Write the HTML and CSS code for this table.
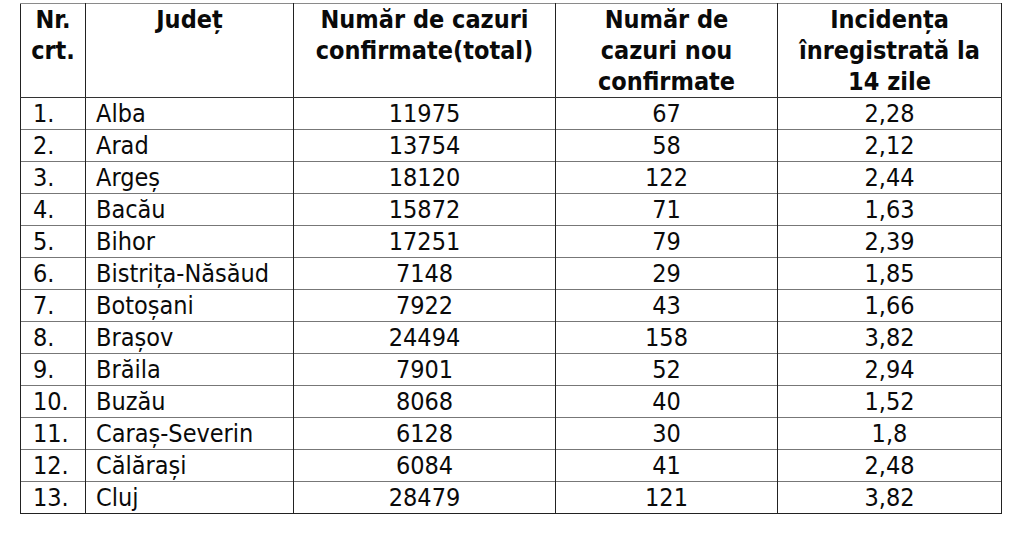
FILE: index.html
```html
<!DOCTYPE html>
<html lang="ro">
<head>
<meta charset="utf-8">
<title>Cazuri confirmate</title>
<link rel="stylesheet" href="styles.css">
</head>
<body>
<table class="tbl">
  <colgroup>
    <col class="c1"><col class="c2"><col class="c3"><col class="c4"><col class="c5">
  </colgroup>
  <thead>
    <tr>
      <th>Nr.<br>crt.</th>
      <th>Județ</th>
      <th>Număr de cazuri<br>confirmate(total)</th>
      <th>Număr de<br>cazuri nou<br>confirmate</th>
      <th>Incidența<br>înregistrată la<br>14 zile</th>
    </tr>
  </thead>
  <tbody>
    <tr><td class="nr">1.</td><td class="name">Alba</td><td>11975</td><td>67</td><td>2,28</td></tr>
    <tr><td class="nr">2.</td><td class="name">Arad</td><td>13754</td><td>58</td><td>2,12</td></tr>
    <tr><td class="nr">3.</td><td class="name">Argeș</td><td>18120</td><td>122</td><td>2,44</td></tr>
    <tr><td class="nr">4.</td><td class="name">Bacău</td><td>15872</td><td>71</td><td>1,63</td></tr>
    <tr><td class="nr">5.</td><td class="name">Bihor</td><td>17251</td><td>79</td><td>2,39</td></tr>
    <tr><td class="nr">6.</td><td class="name">Bistrița-Năsăud</td><td>7148</td><td>29</td><td>1,85</td></tr>
    <tr><td class="nr">7.</td><td class="name">Botoșani</td><td>7922</td><td>43</td><td>1,66</td></tr>
    <tr><td class="nr">8.</td><td class="name">Brașov</td><td>24494</td><td>158</td><td>3,82</td></tr>
    <tr><td class="nr">9.</td><td class="name">Brăila</td><td>7901</td><td>52</td><td>2,94</td></tr>
    <tr><td class="nr">10.</td><td class="name">Buzău</td><td>8068</td><td>40</td><td>1,52</td></tr>
    <tr><td class="nr">11.</td><td class="name">Caraș-Severin</td><td>6128</td><td>30</td><td>1,8</td></tr>
    <tr><td class="nr">12.</td><td class="name">Călărași</td><td>6084</td><td>41</td><td>2,48</td></tr>
    <tr><td class="nr">13.</td><td class="name">Cluj</td><td>28479</td><td>121</td><td>3,82</td></tr>
  </tbody>
</table>
</body>
</html>
```

FILE: styles.css
```css
html, body {
  margin: 0;
  padding: 0;
  background: #ffffff;
}
body {
  padding: 3px 0 0 20px;
  font-family: "DejaVu Sans Condensed", "DejaVu Sans", Verdana, sans-serif;
  color: #0a0a0a;
}
.tbl {
  border-collapse: collapse;
  table-layout: fixed;
  width: 981px;
  font-size: 25px;
}
.c1 { width: 65px; }
.c2 { width: 208px; }
.c3 { width: 262px; }
.c4 { width: 222px; }
.c5 { width: 224px; }
.tbl th, .tbl td {
  border-left: 1px solid #222222;
  border-right: 1px solid #222222;
  padding: 0;
  text-align: center;
  vertical-align: top;
}
.tbl th {
  font-weight: bold;
  line-height: 31px;
  height: 93px;
  padding: 0;
  border-top: 1px solid #8a8a8a;
  border-bottom: 1px solid #333333;
}
.tbl td {
  font-weight: normal;
  line-height: 31px;
  height: 31px;
  border-top: 1px solid #777777;
}
.tbl tbody tr:last-child td {
  border-bottom: 1px solid #222222;
}
.tbl td.nr {
  text-align: left;
  padding-left: 12px;
}
.tbl td.name {
  text-align: left;
  padding-left: 10px;
}
```
